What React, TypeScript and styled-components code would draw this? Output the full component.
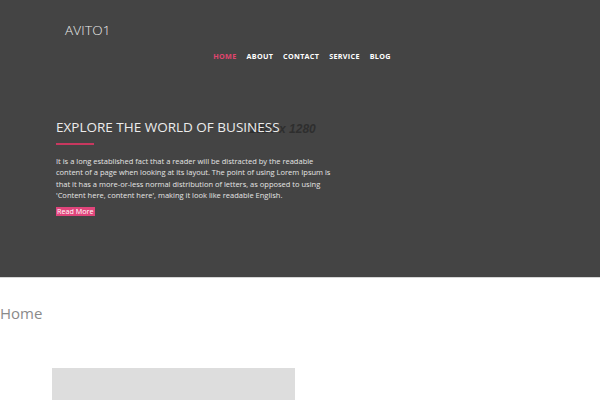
import styled, { createGlobalStyle } from "styled-components";

const GlobalStyle = createGlobalStyle`
  body {
    margin: 0;
    background: #ffffff;
    font-family: "Open Sans", "Liberation Sans", sans-serif;
  }
`;

const navItems = ["Home", "About", "Contact", "Service", "Blog"];

const lines = [
  "It is a long established fact that a reader will be distracted by the readable",
  "content of a page when looking at its layout. The point of using Lorem Ipsum is",
  "that it has a more-or-less normal distribution of letters, as opposed to using",
  "'Content here, content here', making it look like readable English.",
];

const App = () => {
  return (
    <>
      <GlobalStyle />
      <Hero>
        <Header>
          <Logo>AVITO1</Logo>
          <Nav>
            {navItems.map((item, i) => (
              <NavLink key={item} $active={i === 0}>
                {item}
              </NavLink>
            ))}
          </Nav>
        </Header>
        <Banner>
          <Placeholder>1920 x 1280</Placeholder>
          <Title>EXPLORE THE WORLD OF BUSINESS</Title>
          <Underline />
          <Text>
            {lines.map((line) => (
              <Line key={line}>{line}</Line>
            ))}
          </Text>
          <ReadMore>Read More</ReadMore>
        </Banner>
      </Hero>
      <Section>
        <PageTitle>Home</PageTitle>
        <Thumb />
      </Section>
    </>
  );
};

export default App;

const Hero = styled.div`
  background: #444444;
  height: 278px;
  border-bottom: 1px solid #d6d6d6;
  box-sizing: border-box;
  display: flex;
  flex-direction: column;
`;

const Header = styled.div`
  padding: 22px 0 0 65px;
`;

const Logo = styled.div`
  color: #ececec;
  font-size: 13.5px;
  font-weight: 300;
  letter-spacing: 0.2px;
  line-height: 16px;
`;

const Nav = styled.nav`
  display: flex;
  justify-content: center;
  gap: 10px;
  margin: 13px 0 0 -65px;
  padding-left: 4px;
`;

const NavLink = styled.a<{ $active?: boolean }>`
  color: ${(p) => (p.$active ? "#e0456f" : "#ffffff")};
  font-size: 7.2px;
  font-weight: 700;
  text-transform: uppercase;
  letter-spacing: 0.3px;
  line-height: 10px;
`;

const Banner = styled.div`
  position: relative;
  display: flex;
  flex-direction: column;
  align-items: flex-start;
  padding: 58px 0 0 56px;
  width: 270px;
`;

const Placeholder = styled.span`
  position: absolute;
  left: 249px;
  top: 61px;
  color: #2e2e2e;
  font-family: "Liberation Sans", sans-serif;
  font-size: 12px;
  font-weight: 700;
  font-style: italic;
  white-space: nowrap;
`;

const Title = styled.h1`
  position: relative;
  margin: 0;
  color: #ececec;
  font-size: 13.5px;
  font-weight: 400;
  line-height: 16px;
  white-space: nowrap;
`;

const Underline = styled.div`
  width: 38px;
  height: 2px;
  background: #c8385f;
  margin: 8px 0 11px;
`;

const Text = styled.p`
  margin: 0;
  color: #e4e4e4;
  font-size: 7.5px;
  line-height: 11.4px;
`;

const Line = styled.span`
  display: block;
  white-space: nowrap;
`;

const ReadMore = styled.a`
  margin-top: 5px;
  background: #e0457b;
  color: #ffffff;
  font-size: 7.2px;
  line-height: 9px;
  padding: 0 1px;
`;

const Section = styled.div`
  padding-top: 26px;
`;

const PageTitle = styled.h2`
  margin: 0;
  color: #8a8a8a;
  font-size: 15px;
  font-weight: 400;
  line-height: 18px;
`;

const Thumb = styled.div`
  margin: 46px 0 0 52px;
  width: 243px;
  height: 40px;
  background: #dddddd;
`;
